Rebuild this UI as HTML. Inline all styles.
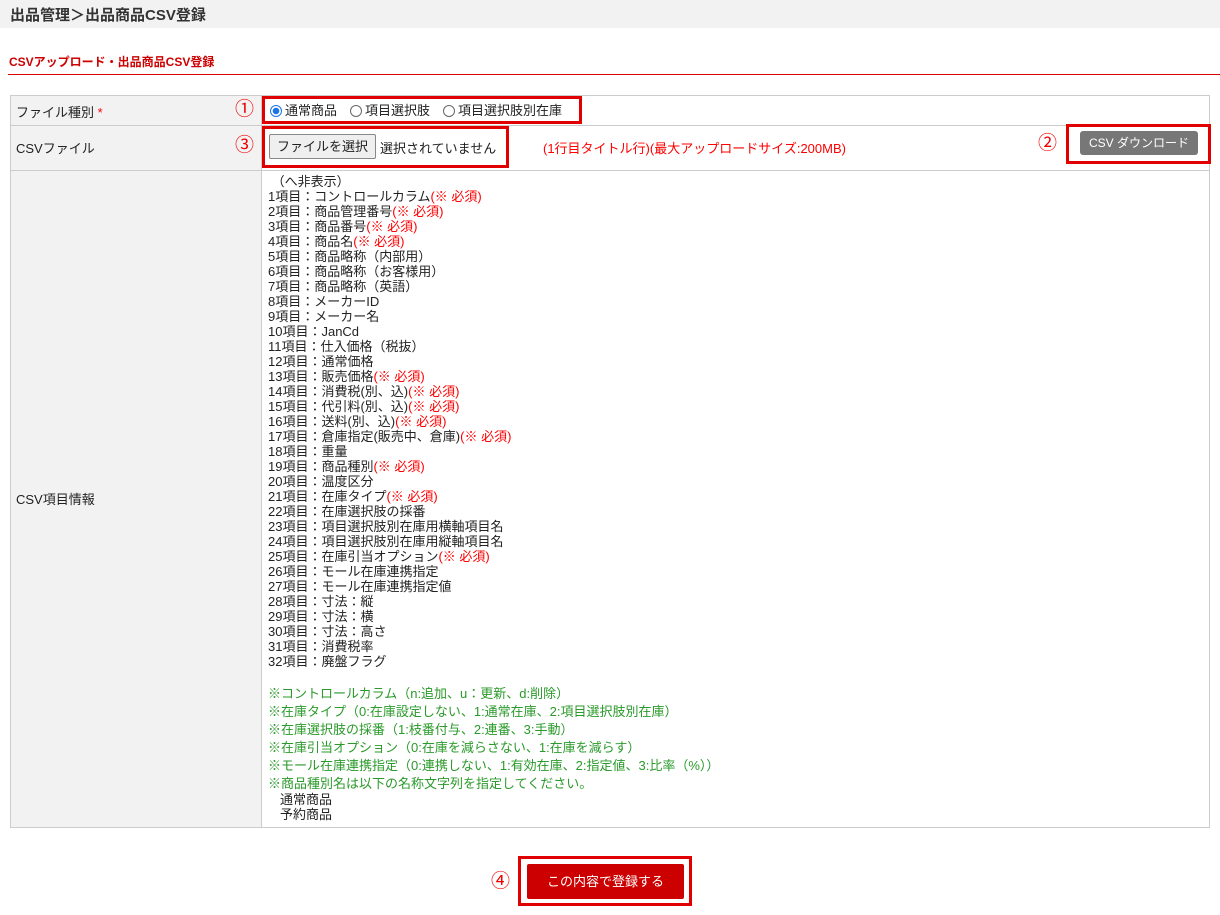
<!DOCTYPE html>
<html><head><meta charset="utf-8"><style>
*{margin:0;padding:0;box-sizing:border-box}
body{width:1220px;height:915px;background:#fff;font-family:"Liberation Sans","Noto Sans CJK JP",sans-serif;color:#222;font-size:13px;position:relative;overflow:hidden}
.a{position:absolute;white-space:nowrap}
.hdr{left:0;top:0;width:1220px;height:28px;background:#f2f2f2}
.r{color:#f00}.g{color:#2a9a2a}
.box{position:absolute;border:3px solid #e00000}
.circ{position:absolute;width:19px;height:19px;color:#e00;font-size:19px;text-align:center;line-height:19px}
.lbl{background:#f2f2f2}
.radio{display:inline-block;width:12px;height:12px;border:1px solid #666;border-radius:50%;vertical-align:-2px;margin-right:3px;background:#fff}
.radio.on{border-color:#1a73e8;background:radial-gradient(circle,#1a73e8 0 3px,#fff 3.5px)}
</style></head><body>
<div class="a hdr"></div>
<div class="a" style="left:10px;top:4px;font-size:15px;font-weight:bold;color:#333">出品管理＞出品商品CSV登録</div>
<div class="a" style="left:9px;top:53px;font-size:12px;font-weight:bold;color:#c00">CSVアップロード・出品商品CSV登録</div>
<div class="a" style="left:8px;top:74px;width:1212px;height:1px;background:#d00"></div>

<div class="a lbl" style="left:10px;top:95px;width:252px;height:733px;border:1px solid #ccc"></div>
<div class="a" style="left:261px;top:95px;width:949px;height:733px;border:1px solid #ccc"></div>
<div class="a" style="left:10px;top:125px;width:1200px;height:1px;background:#ccc"></div>
<div class="a" style="left:10px;top:170px;width:1200px;height:1px;background:#ccc"></div>

<div class="a" style="left:16px;top:102px">ファイル種別 <span class="r">*</span></div>
<div class="a" style="left:16px;top:138px">CSVファイル</div>
<div class="a" style="left:16px;top:489px">CSV項目情報</div>

<div class="circ" style="left:235px;top:100px">①</div>
<div class="circ" style="left:235px;top:136px">③</div>
<div class="circ" style="left:1038px;top:134px">②</div>
<div class="circ" style="left:491px;top:872px">④</div>

<div class="box" style="left:262px;top:96px;width:320px;height:28px"></div>
<div class="a" style="left:270px;top:100px"><span class="radio on"></span>通常商品　<span class="radio"></span>項目選択肢　<span class="radio"></span>項目選択肢別在庫</div>

<div class="box" style="left:262px;top:126px;width:247px;height:42px"></div>
<div class="a" style="left:269px;top:134px;width:107px;height:25px;border:1px solid #888;border-radius:2px;background:#efefef;text-align:center;line-height:23px">ファイルを選択</div>
<div class="a" style="left:380px;top:138px">選択されていません</div>
<div class="a r" style="left:543px;top:138px;font-size:13px">(1行目タイトル行)(最大アップロードサイズ:200MB)</div>

<div class="box" style="left:1066px;top:124px;width:145px;height:40px"></div>
<div class="a" style="left:1080px;top:131px;width:118px;height:24px;background:#777;border-radius:3px;color:#fff;font-size:12px;text-align:center;line-height:24px">CSV ダウンロード</div>

<div class="a" style="left:268px;top:174px;line-height:15px;font-size:13px;color:#222">
&nbsp;（へ非表示）<br>
1項目：コントロールカラム<span class="r">(※ 必須)</span><br>
2項目：商品管理番号<span class="r">(※ 必須)</span><br>
3項目：商品番号<span class="r">(※ 必須)</span><br>
4項目：商品名<span class="r">(※ 必須)</span><br>
5項目：商品略称（内部用）<br>
6項目：商品略称（お客様用）<br>
7項目：商品略称（英語）<br>
8項目：メーカーID<br>
9項目：メーカー名<br>
10項目：JanCd<br>
11項目：仕入価格（税抜）<br>
12項目：通常価格<br>
13項目：販売価格<span class="r">(※ 必須)</span><br>
14項目：消費税(別、込)<span class="r">(※ 必須)</span><br>
15項目：代引料(別、込)<span class="r">(※ 必須)</span><br>
16項目：送料(別、込)<span class="r">(※ 必須)</span><br>
17項目：倉庫指定(販売中、倉庫)<span class="r">(※ 必須)</span><br>
18項目：重量<br>
19項目：商品種別<span class="r">(※ 必須)</span><br>
20項目：温度区分<br>
21項目：在庫タイプ<span class="r">(※ 必須)</span><br>
22項目：在庫選択肢の採番<br>
23項目：項目選択肢別在庫用横軸項目名<br>
24項目：項目選択肢別在庫用縦軸項目名<br>
25項目：在庫引当オプション<span class="r">(※ 必須)</span><br>
26項目：モール在庫連携指定<br>
27項目：モール在庫連携指定値<br>
28項目：寸法：縦<br>
29項目：寸法：横<br>
30項目：寸法：高さ<br>
31項目：消費税率<br>
32項目：廃盤フラグ
</div>
<div class="a g" style="left:268px;top:685px;line-height:18px">
※コントロールカラム（n:追加、u：更新、d:削除）<br>
※在庫タイプ（0:在庫設定しない、1:通常在庫、2:項目選択肢別在庫）<br>
※在庫選択肢の採番（1:枝番付与、2:連番、3:手動）<br>
※在庫引当オプション（0:在庫を減らさない、1:在庫を減らす）<br>
※モール在庫連携指定（0:連携しない、1:有効在庫、2:指定値、3:比率（%））<br>
※商品種別名は以下の名称文字列を指定してください。
</div>
<div class="a" style="left:280px;top:792px;line-height:15px">通常商品<br>予約商品</div>

<div class="box" style="left:518px;top:856px;width:174px;height:50px"></div>
<div class="a" style="left:527px;top:864px;width:157px;height:35px;background:#c00;border-radius:2px;color:#fff;text-align:center;line-height:35px">この内容で登録する</div>
</body></html>
